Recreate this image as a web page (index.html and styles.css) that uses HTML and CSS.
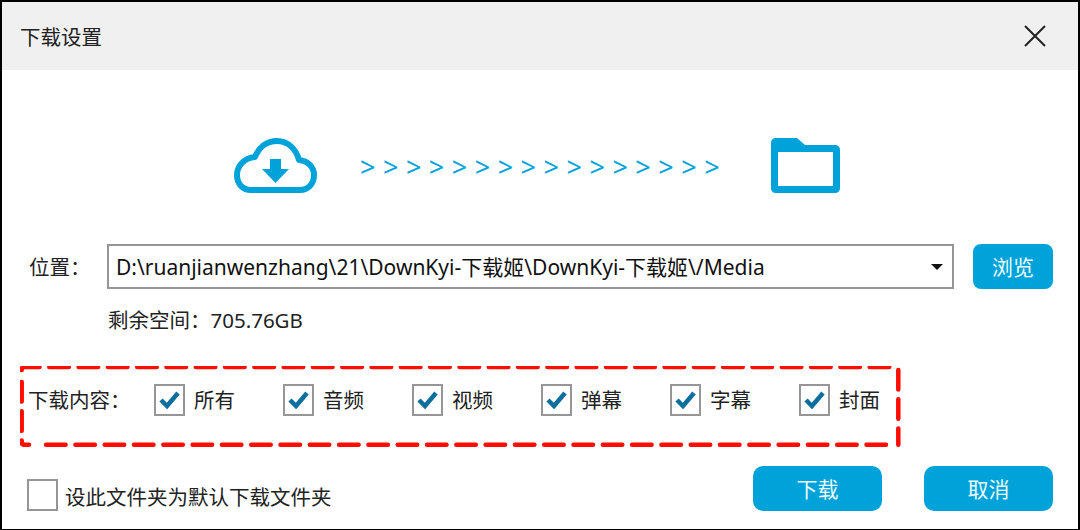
FILE: index.html
```html
<!DOCTYPE html>
<html lang="zh-CN">
<head>
    <meta charset="UTF-8">
    <title>下载设置</title>
    <link rel="stylesheet" href="styles.css">
</head>
<body>

    <div class="dialog">
        <div class="title-bar">
            <span class="title">下载设置</span>
            <svg class="close-icon" width="24" height="24" viewBox="0 0 24 24">
                <path d="M2 2L22 22M22 2L2 22" fill="none" stroke="#222" stroke-width="2"/>
            </svg>
        </div>

        <div class="transfer-row">
            <svg class="cloud-icon" width="84" height="56" viewBox="0 0 84 56">
                <path d="M18 52C9 52 4 45 4 37C4 28 11 20 22 19C26 9 34 3 44 3C55 3 63 11 66 22C75 23 81 29 81 37C81 46 75 52 67 52Z" fill="none" stroke="#00a3d9" stroke-width="6" stroke-linejoin="round"/>
                <path d="M37 21H48V31H56L42.500 45L29 31H37Z" fill="#00a3d9"/>
            </svg>
            <div class="arrows">&gt;&gt;&gt;&gt;&gt;&gt;&gt;&gt;&gt;&gt;&gt;&gt;&gt;&gt;&gt;&gt;</div>
            <svg class="folder-icon" width="70" height="56" viewBox="0 0 70 56">
                <path d="M5 0H26L34 7H64C67 7 69 9 69 12V50C69 53 67 55 64 55H5C2 55 0 53 0 50V5C0 2 2 0 5 0ZM7 14V48H62V14Z" fill="#00a3d9" fill-rule="evenodd"/>
            </svg>
        </div>

        <div class="path-row">
            <label class="path-label">位置：</label>
            <div class="path-select">
                <span>D:\ruanjianwenzhang\21\DownKyi-下载姬\DownKyi-下载姬\/Media</span>
                <span class="caret"></span>
            </div>
            <button class="btn btn-browse">浏览</button>
        </div>

        <div class="free-space">剩余空间：705.76GB</div>

        <div class="content-row">
            <svg class="dash-frame" width="884" height="83" viewBox="0 0 884 83">
                <path class="dash" d="M1.700 4Q1.700 1 5 1H871"/>
                <path class="dash" d="M878.300 4V78.700"/>
                <path class="dash" d="M866 78.700H26"/>
                <path class="dash" d="M1.700 16V76Q1.700 78.700 5 78.700H9"/>
            </svg>
            <span class="content-label">下载内容：</span>
            <div class="content-options">
                <div class="option"><span class="check"><svg width="21" height="18" viewBox="0 0 21 18"><path d="M2 9L8 15L19 2" fill="none" stroke="#0e6f9f" stroke-width="4.500"/></svg></span>所有</div>
                <div class="option"><span class="check"><svg width="21" height="18" viewBox="0 0 21 18"><path d="M2 9L8 15L19 2" fill="none" stroke="#0e6f9f" stroke-width="4.500"/></svg></span>音频</div>
                <div class="option"><span class="check"><svg width="21" height="18" viewBox="0 0 21 18"><path d="M2 9L8 15L19 2" fill="none" stroke="#0e6f9f" stroke-width="4.500"/></svg></span>视频</div>
                <div class="option"><span class="check"><svg width="21" height="18" viewBox="0 0 21 18"><path d="M2 9L8 15L19 2" fill="none" stroke="#0e6f9f" stroke-width="4.500"/></svg></span>弹幕</div>
                <div class="option"><span class="check"><svg width="21" height="18" viewBox="0 0 21 18"><path d="M2 9L8 15L19 2" fill="none" stroke="#0e6f9f" stroke-width="4.500"/></svg></span>字幕</div>
                <div class="option"><span class="check"><svg width="21" height="18" viewBox="0 0 21 18"><path d="M2 9L8 15L19 2" fill="none" stroke="#0e6f9f" stroke-width="4.500"/></svg></span>封面</div>
            </div>
        </div>

        <div class="footer-row">
            <div class="default-option"><span class="check"></span><span class="default-text">设此文件夹为默认下载文件夹</span></div>
            <div class="footer-buttons">
                <button class="btn btn-action">下载</button>
                <button class="btn btn-action">取消</button>
            </div>
        </div>
    </div>

</body>
</html>
```

FILE: styles.css
```css
* {
    box-sizing: border-box;
}

body {
    margin: 0;
    background: #fff;
    color: #222;
    font-family: "Noto Sans", "Noto Sans CJK SC", sans-serif;
    font-size: 20.500px;
    line-height: 28px;
}

.dialog {
    width: 1080px;
    height: 530px;
    border: solid #000;
    border-width: 2px 2px 1px 2px;
    overflow: hidden;
}

.title-bar {
    display: flex;
    align-items: center;
    justify-content: space-between;
    height: 68px;
    padding: 0 31px 0 18px;
    background: #f0f0f0;
}

.title {
    padding-top: 2px;
}

.transfer-row {
    display: flex;
    align-items: center;
    height: 56px;
    margin-top: 68px;
    padding-left: 231px;
}

.arrows {
    margin-left: 43px;
    width: 366px;
    padding-top: 2px;
    color: #00a3d9;
    font-size: 27px;
    letter-spacing: 7.500px;
    white-space: nowrap;
}

.folder-icon {
    margin-left: 45px;
}

.path-row {
    display: flex;
    align-items: center;
    margin-top: 50px;
    padding-left: 27px;
}

.path-label {
    width: 78px;
}

.path-select {
    display: flex;
    align-items: center;
    justify-content: space-between;
    width: 847px;
    height: 45px;
    padding: 0 9px 0 7px;
    border: 2px solid #969696;
    color: #111;
    font-size: 21px;
}

.caret {
    border: solid transparent;
    border-width: 6px 6px 0;
    border-top-color: #111;
}

.btn {
    border: none;
    background: #00a3d9;
    color: #eefaff;
    font: inherit;
    font-size: 21px;
    padding: 0;
}

.btn-browse {
    width: 80px;
    height: 45px;
    margin-left: 19px;
    border-radius: 8px;
}

.free-space {
    margin-top: 17px;
    padding-left: 106px;
}

.content-row {
    position: relative;
    display: flex;
    align-items: center;
    height: 83px;
    margin-top: 32px;
    margin-left: 18px;
    padding: 0 0 15px 8px;
}

.dash-frame {
    position: absolute;
    left: 0;
    top: 0;
}

.dash {
    fill: none;
    stroke: #ff0d00;
    stroke-width: 4.500px;
    stroke-linecap: round;
    stroke-dasharray: 19.500 9.800;
}

.content-label {
    width: 126px;
}

.content-options {
    display: flex;
}

.option {
    display: flex;
    align-items: center;
    width: 129px;
}

.check {
    display: flex;
    align-items: center;
    justify-content: center;
    flex-shrink: 0;
    width: 31px;
    height: 32px;
    margin-right: 9px;
    border: 2px solid #969696;
    background: #fff;
}

.footer-row {
    display: flex;
    align-items: flex-end;
    justify-content: space-between;
    margin-top: 17px;
    padding: 0 25px 0 25px;
}

.default-option {
    display: flex;
    align-items: center;
}

.default-option .check {
    margin-right: 7px;
}

.default-text {
    padding-top: 3px;
}

.footer-buttons {
    display: flex;
    gap: 42px;
}

.btn-action {
    width: 129px;
    height: 45px;
    border-radius: 10px;
}
```
